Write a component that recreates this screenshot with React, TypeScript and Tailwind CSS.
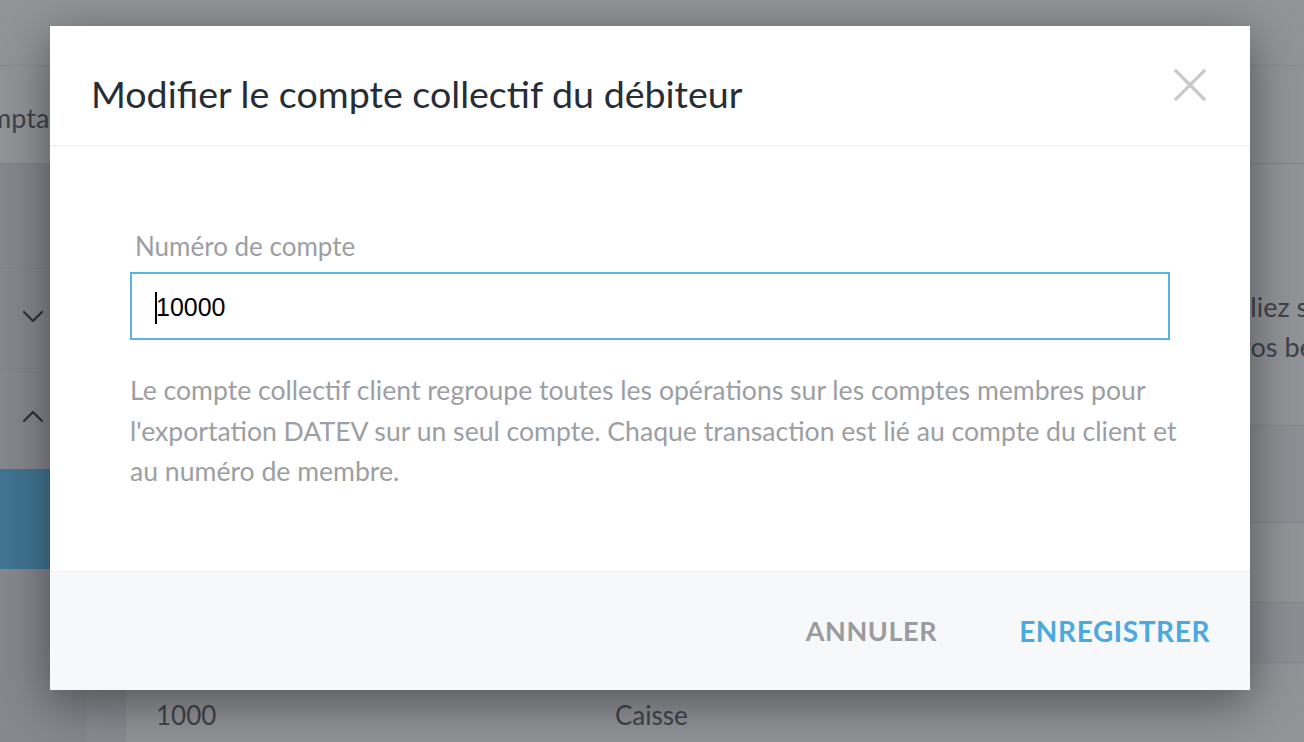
import React from 'react'

function CloseIcon() {
  return (
    <svg width="34" height="34" viewBox="0 0 34 34" fill="none">
      <path d="M3 3 L31 31 M31 3 L3 31" stroke="#c9c9cb" strokeWidth="3.2" strokeLinecap="square" />
    </svg>
  )
}

function Chevron({ up }: { up?: boolean }) {
  return (
    <svg width="22" height="14" viewBox="0 0 22 14" fill="none">
      <path
        d={up ? 'M2 12 L11 3 L20 12' : 'M2 3 L11 12 L20 3'}
        stroke="#3d4247"
        strokeWidth="2.2"
        strokeLinecap="round"
        strokeLinejoin="round"
      />
    </svg>
  )
}

// page that sits behind the dialog
function Background() {
  return (
    <div className="flex h-full flex-col bg-[#eef0f3] text-[#5f656d]">
      <div className="h-[66px] shrink-0 border-b border-[#e6e7ea] bg-white" />
      <div className="flex h-[98px] shrink-0 items-center overflow-hidden border-b border-[#dfe1e5] bg-white pt-[8px]">
        <span className="ml-[-44px] whitespace-nowrap text-[27px]">Comptabilité</span>
      </div>
      <div className="flex flex-1">
        <aside className="flex w-[86px] shrink-0 flex-col bg-[#e7e9ec]">
          <div className="h-[105px] border-b border-[#d8dbe0]" />
          <div className="flex h-[100px] items-center justify-center border-b border-[#d8dbe0] pb-[6px] pr-[20px]">
            <Chevron />
          </div>
          <div className="flex h-[100px] items-center justify-center pb-[6px] pr-[20px]">
            <Chevron up />
          </div>
          <div className="h-[100px] bg-[#62c4f5]" />
        </aside>
        <main className="flex-1 overflow-hidden pl-[40px]">
          <div className="h-full bg-white">
            <div className="flex h-[261px] flex-col pt-[123px] text-[27px] leading-[40px] text-[#5f656d]">
              <span className="ml-[1094px] whitespace-nowrap">Reliez simplement vos comptes</span>
              <span className="ml-[1111px] whitespace-nowrap">vos besoins.</span>
            </div>
            <div className="h-[98px] border-b border-t border-[#e0e2e6] bg-[#f6f7f9]" />
            <div className="h-[80px] border-b border-[#e0e2e6]" />
            <div className="h-[60px] border-b border-[#e0e2e6] bg-[#f3f5fa]" />
            <div className="flex h-[104px] items-center text-[26px]">
              <span className="ml-[30px] w-[459px]">1000</span>
              <span>Caisse</span>
            </div>
          </div>
        </main>
      </div>
    </div>
  )
}

export default function App() {
  return (
    <div className="relative h-[742px] w-full overflow-hidden font-['Lato','Noto_Sans',sans-serif]">
      <Background />
      <div className="absolute inset-0 bg-[rgba(30,32,40,0.48)]" />
      <div className="absolute inset-0 pl-[50px] pt-[26px]">
        <div className="flex w-[1200px] flex-col bg-white shadow-[0_12px_48px_rgba(0,0,0,0.45)]">
          <div className="flex h-[120px] items-start justify-between border-b border-[#ececee] pl-[41px] pr-[43px]">
            <h2 className="mt-[46px] whitespace-nowrap text-[37.6px] leading-[44px] text-[#262d36]">
              Modifier le compte collectif du débiteur
            </h2>
            <button className="mt-[42px]">
              <CloseIcon />
            </button>
          </div>

          <div className="h-[425px] px-[80px] pt-[83px]">
            <label className="ml-[5px] block text-[26px] leading-[34px] text-[#9c9ea3]">Numéro de compte</label>
            <div className="mt-[9px] flex h-[68px] items-center border-2 border-[#5ab4e1] pl-[23px] pt-[4px] font-['Liberation_Sans',Arial,sans-serif] text-[25px] text-black">
              <span className="mr-[-1px] h-[32px] w-[2px] bg-black" />
              10000
            </div>
            <p className="mt-[30px] whitespace-nowrap text-[26.6px] leading-[40.5px] text-[#9c9ea3]">
              Le compte collectif client regroupe toutes les opérations sur les comptes membres pour
              <br />
              l'exportation DATEV sur un seul compte. Chaque transaction est lié au compte du client et
              <br />
              au numéro de membre.
            </p>
          </div>

          <div className="flex h-[119px] items-center justify-end gap-[82px] border-t border-[#efeff1] bg-[#f7f8fa] pr-[40px]">
            <button className="text-[27px] font-bold tracking-[0.6px] text-[#9a9b9f]">ANNULER</button>
            <button className="text-[28px] font-bold tracking-[0.6px] text-[#4aa9de]">ENREGISTRER</button>
          </div>
        </div>
      </div>
    </div>
  )
}
